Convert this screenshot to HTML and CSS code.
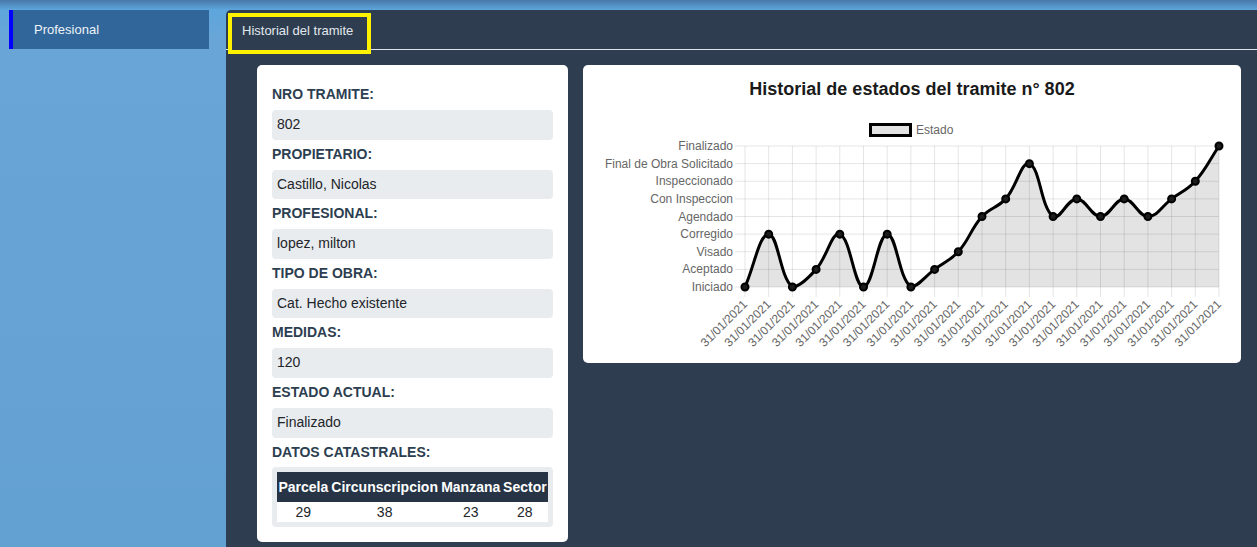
FILE: index.html
```html
<!DOCTYPE html>
<html lang="es">
<head>
<meta charset="utf-8">
<title>Historial del tramite</title>
<link rel="stylesheet" href="styles.css">
</head>
<body>
<div class="layout">
  <aside class="sidebar">
    <a class="side-item">Profesional</a>
  </aside>
  <main class="main">
    <nav class="tabs"><span class="tab">Historial del tramite</span></nav>
    <div class="content">
      <section class="card info">
        <div class="label">NRO TRAMITE:</div>
        <div class="value">802</div>
        <div class="label">PROPIETARIO:</div>
        <div class="value">Castillo, Nicolas</div>
        <div class="label">PROFESIONAL:</div>
        <div class="value">lopez, milton</div>
        <div class="label">TIPO DE OBRA:</div>
        <div class="value">Cat. Hecho existente</div>
        <div class="label">MEDIDAS:</div>
        <div class="value">120</div>
        <div class="label">ESTADO ACTUAL:</div>
        <div class="value">Finalizado</div>
        <div class="label last">DATOS CATASTRALES:</div>
        <div class="table-wrap">
          <table class="cat">
            <thead><tr><th>Parcela</th><th>Circunscripcion</th><th>Manzana</th><th>Sector</th></tr></thead>
            <tbody><tr><td>29</td><td>38</td><td>23</td><td>28</td></tr></tbody>
          </table>
        </div>
      </section>
      <section class="card chart">
        <svg class="chart-svg" width="658" height="298" viewBox="0 0 658 298">
          <text class="title" x="329" y="29.5">Historial de estados del tramite n° 802</text>
          <rect class="legend-box" x="287.5" y="59.5" width="40" height="11"></rect>
          <text class="legend-text" x="333" y="69">Estado</text>
          <g class="grid">
            <line x1="162" y1="81" x2="162" y2="232"/>
            <line x1="185.7" y1="81" x2="185.7" y2="232"/>
            <line x1="209.4" y1="81" x2="209.4" y2="232"/>
            <line x1="233.1" y1="81" x2="233.1" y2="232"/>
            <line x1="256.8" y1="81" x2="256.8" y2="232"/>
            <line x1="280.5" y1="81" x2="280.5" y2="232"/>
            <line x1="304.2" y1="81" x2="304.2" y2="232"/>
            <line x1="327.9" y1="81" x2="327.9" y2="232"/>
            <line x1="351.6" y1="81" x2="351.6" y2="232"/>
            <line x1="375.3" y1="81" x2="375.3" y2="232"/>
            <line x1="399" y1="81" x2="399" y2="232"/>
            <line x1="422.7" y1="81" x2="422.7" y2="232"/>
            <line x1="446.4" y1="81" x2="446.4" y2="232"/>
            <line x1="470.1" y1="81" x2="470.1" y2="232"/>
            <line x1="493.8" y1="81" x2="493.8" y2="232"/>
            <line x1="517.5" y1="81" x2="517.5" y2="232"/>
            <line x1="541.2" y1="81" x2="541.2" y2="232"/>
            <line x1="564.9" y1="81" x2="564.9" y2="232"/>
            <line x1="588.6" y1="81" x2="588.6" y2="232"/>
            <line x1="612.3" y1="81" x2="612.3" y2="232"/>
            <line x1="636" y1="81" x2="636" y2="232"/>
            <line x1="152" y1="222" x2="636" y2="222"/>
            <line x1="152" y1="204.4" x2="636" y2="204.4"/>
            <line x1="152" y1="186.75" x2="636" y2="186.75"/>
            <line x1="152" y1="169.1" x2="636" y2="169.1"/>
            <line x1="152" y1="151.5" x2="636" y2="151.5"/>
            <line x1="152" y1="133.9" x2="636" y2="133.9"/>
            <line x1="152" y1="116.25" x2="636" y2="116.25"/>
            <line x1="152" y1="98.6" x2="636" y2="98.6"/>
            <line x1="152" y1="81" x2="636" y2="81"/>
          </g>
          <g class="ylabels">
            <text x="150" y="226">Iniciado</text>
            <text x="150" y="208.4">Aceptado</text>
            <text x="150" y="190.8">Visado</text>
            <text x="150" y="173.1">Corregido</text>
            <text x="150" y="155.5">Agendado</text>
            <text x="150" y="137.9">Con Inspeccion</text>
            <text x="150" y="120.3">Inspeccionado</text>
            <text x="150" y="102.6">Final de Obra Solicitado</text>
            <text x="150" y="85">Finalizado</text>
          </g>
          <g class="xlabels">
            <text transform="translate(165 240) rotate(-45)">31/01/2021</text>
            <text transform="translate(188.7 240) rotate(-45)">31/01/2021</text>
            <text transform="translate(212.4 240) rotate(-45)">31/01/2021</text>
            <text transform="translate(236.1 240) rotate(-45)">31/01/2021</text>
            <text transform="translate(259.8 240) rotate(-45)">31/01/2021</text>
            <text transform="translate(283.5 240) rotate(-45)">31/01/2021</text>
            <text transform="translate(307.2 240) rotate(-45)">31/01/2021</text>
            <text transform="translate(330.9 240) rotate(-45)">31/01/2021</text>
            <text transform="translate(354.6 240) rotate(-45)">31/01/2021</text>
            <text transform="translate(378.3 240) rotate(-45)">31/01/2021</text>
            <text transform="translate(402 240) rotate(-45)">31/01/2021</text>
            <text transform="translate(425.7 240) rotate(-45)">31/01/2021</text>
            <text transform="translate(449.4 240) rotate(-45)">31/01/2021</text>
            <text transform="translate(473.1 240) rotate(-45)">31/01/2021</text>
            <text transform="translate(496.8 240) rotate(-45)">31/01/2021</text>
            <text transform="translate(520.5 240) rotate(-45)">31/01/2021</text>
            <text transform="translate(544.2 240) rotate(-45)">31/01/2021</text>
            <text transform="translate(567.9 240) rotate(-45)">31/01/2021</text>
            <text transform="translate(591.6 240) rotate(-45)">31/01/2021</text>
            <text transform="translate(615.3 240) rotate(-45)">31/01/2021</text>
            <text transform="translate(639 240) rotate(-45)">31/01/2021</text>
          </g>
          <path class="area" d="M162,222 C171.48,200.85 176.22,169.125 185.7,169.125 C195.18,169.125 196.84,212.66 209.4,222 C215.8,222 225.32,213.05 233.1,204.375 C244.28,191.9 248.78,166.14 256.8,169.125 C267.74,173.19 271.02,222 280.5,222 C289.98,222 294.72,169.125 304.2,169.125 C313.68,169.125 315.34,212.66 327.9,222 C334.3,222 342.12,211.43 351.6,204.375 C361.08,197.33 367.52,195.43 375.3,186.75 C386.48,174.28 387.82,163.98 399,151.5 C406.78,142.83 414.92,142.55 422.7,133.875 C433.88,121.4 438.38,95.64 446.4,98.625 C457.34,102.69 457.54,142.16 470.1,151.5 C476.5,156.26 484.32,133.875 493.8,133.875 C503.28,133.875 508.02,151.5 517.5,151.5 C526.98,151.5 531.72,133.875 541.2,133.875 C550.68,133.875 555.42,151.5 564.9,151.5 C574.38,151.5 579.12,140.93 588.6,133.875 C598.08,126.83 604.52,124.93 612.3,116.25 C623.48,103.78 626.52,95.1 636,81 L636,222 L162,222 Z"/>
          <path class="line" d="M162,222 C171.48,200.85 176.22,169.125 185.7,169.125 C195.18,169.125 196.84,212.66 209.4,222 C215.8,222 225.32,213.05 233.1,204.375 C244.28,191.9 248.78,166.14 256.8,169.125 C267.74,173.19 271.02,222 280.5,222 C289.98,222 294.72,169.125 304.2,169.125 C313.68,169.125 315.34,212.66 327.9,222 C334.3,222 342.12,211.43 351.6,204.375 C361.08,197.33 367.52,195.43 375.3,186.75 C386.48,174.28 387.82,163.98 399,151.5 C406.78,142.83 414.92,142.55 422.7,133.875 C433.88,121.4 438.38,95.64 446.4,98.625 C457.34,102.69 457.54,142.16 470.1,151.5 C476.5,156.26 484.32,133.875 493.8,133.875 C503.28,133.875 508.02,151.5 517.5,151.5 C526.98,151.5 531.72,133.875 541.2,133.875 C550.68,133.875 555.42,151.5 564.9,151.5 C574.38,151.5 579.12,140.93 588.6,133.875 C598.08,126.83 604.52,124.93 612.3,116.25 C623.48,103.78 626.52,95.1 636,81"/>
          <g class="points">
            <circle cx="162" cy="222" r="3.5"/>
            <circle cx="185.7" cy="169.125" r="3.5"/>
            <circle cx="209.4" cy="222" r="3.5"/>
            <circle cx="233.1" cy="204.375" r="3.5"/>
            <circle cx="256.8" cy="169.125" r="3.5"/>
            <circle cx="280.5" cy="222" r="3.5"/>
            <circle cx="304.2" cy="169.125" r="3.5"/>
            <circle cx="327.9" cy="222" r="3.5"/>
            <circle cx="351.6" cy="204.375" r="3.5"/>
            <circle cx="375.3" cy="186.75" r="3.5"/>
            <circle cx="399" cy="151.5" r="3.5"/>
            <circle cx="422.7" cy="133.875" r="3.5"/>
            <circle cx="446.4" cy="98.625" r="3.5"/>
            <circle cx="470.1" cy="151.5" r="3.5"/>
            <circle cx="493.8" cy="133.875" r="3.5"/>
            <circle cx="517.5" cy="151.5" r="3.5"/>
            <circle cx="541.2" cy="133.875" r="3.5"/>
            <circle cx="564.9" cy="151.5" r="3.5"/>
            <circle cx="588.6" cy="133.875" r="3.5"/>
            <circle cx="612.3" cy="116.25" r="3.5"/>
            <circle cx="636" cy="81" r="3.5"/>
          </g>
        </svg>
      </section>
    </div>
  </main>
</div>
</body>
</html>
```
FILE: styles.css
```css
* { box-sizing: border-box; }
html, body { margin: 0; padding: 0; }
body {
  font-family: "Liberation Sans", Arial, Helvetica, sans-serif;
  background: linear-gradient(180deg, #4878a8 0px, #5ea6dd 10px, #69a5d7 40px, #64a1d3 547px);
  min-height: 547px;
  overflow: hidden;
}
.layout {
  display: flex;
  height: 547px;
}
.sidebar {
  width: 226px;
  flex: none;
  padding: 10px 17px 0 9px;
}
.side-item {
  display: block;
  height: 39px;
  line-height: 39px;
  background: #31669a;
  border-left: 4px solid #0000ff;
  padding-left: 21px;
  color: #eef3f8;
  font-size: 13px;
}
.main {
  flex: 1;
  margin-top: 10px;
  background: #2e3e50;
  border-top-left-radius: 5px;
}
.tabs {
  display: flex;
  padding: 3px 0 0 2px;
  border-bottom: 1px solid #dfe3e8;
}
.tab {
  display: block;
  height: 41px;
  margin-bottom: -5px;
  border: 4px solid #fff200;
  background: #2e3e50;
  color: #e3e8ee;
  font-size: 13px;
  line-height: 24px;
  padding: 2px 14px 0 10px;
}
.content {
  display: flex;
  align-items: flex-start;
  gap: 15px;
  padding: 15px 16px 0 31px;
}
.card {
  background: #ffffff;
  border-radius: 5px;
}
.info {
  width: 311px;
  flex: none;
  padding: 19px 15px 15px;
}
.label {
  font-weight: bold;
  font-size: 14px;
  line-height: 20px;
  color: #2c3e50;
  margin-bottom: 6px;
}
.label.last { margin-bottom: 5px; }
.value {
  background: #e9ecef;
  border-radius: 4px;
  padding: 4px 5px;
  font-size: 14px;
  line-height: 21.6px;
  color: #212529;
  margin-bottom: 4px;
}
.table-wrap {
  background: #e9ecef;
  border-radius: 4px;
  padding: 5px;
}
.cat {
  width: 100%;
  border-collapse: collapse;
  font-size: 14px;
}
.cat th {
  background: #263445;
  color: #ffffff;
  font-weight: bold;
  height: 30px;
  padding: 0 1px;
  text-align: center;
  white-space: nowrap;
}
.cat td {
  background: #ffffff;
  color: #212529;
  height: 20px;
  padding: 0;
  text-align: center;
}
.chart {
  width: 658px;
  flex: none;
  height: 298px;
}
.chart-svg {
  display: block;
  font-family: "Liberation Sans", Arial, Helvetica, sans-serif;
}
.title {
  font-size: 18px;
  font-weight: bold;
  fill: #1a1a1a;
  text-anchor: middle;
}
.legend-box {
  fill: #e3e3e3;
  stroke: #000;
  stroke-width: 3;
}
.legend-text {
  font-size: 12px;
  fill: #666;
}
.grid line {
  stroke: rgba(0, 0, 0, 0.1);
  stroke-width: 1;
}
.ylabels text {
  font-size: 12px;
  fill: #666;
  text-anchor: end;
}
.xlabels text {
  font-size: 12px;
  fill: #666;
  text-anchor: end;
}
.area {
  fill: rgba(0, 0, 0, 0.11);
  stroke: none;
}
.line {
  fill: none;
  stroke: #000;
  stroke-width: 3;
}
.points circle {
  fill: #1c1c1c;
  stroke: #000;
  stroke-width: 2;
}
```
